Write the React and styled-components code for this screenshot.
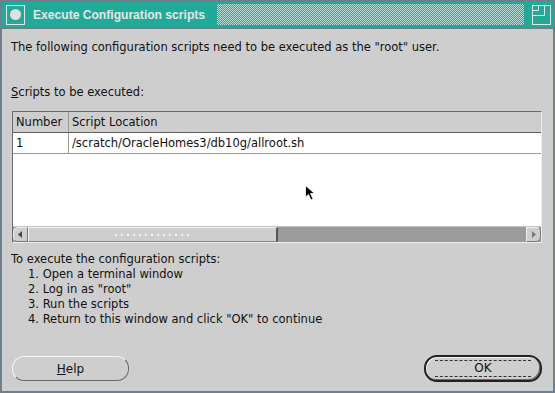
import React from 'react';
import styled, { createGlobalStyle } from 'styled-components';

const Global = createGlobalStyle`
  html, body { margin: 0; padding: 0; background: #6f7f8b; }
  body { font-family: "DejaVu Sans", "Liberation Sans", sans-serif; }
`;

const Frame = styled.div`
  width: 555px;
  height: 393px;
  box-sizing: border-box;
  border: 2px solid #6f7f8b;
  background: #cecece;
  display: flex;
  flex-direction: column;
  position: relative;
  overflow: hidden;
`;

const TitleBar = styled.div`
  height: 25px;
  background: #22aa99;
  display: flex;
  align-items: center;
  padding: 0 2px 0 2px;
  border-bottom: 2px solid #6f7f8b;
`;

const IconBox = styled.div`
  width: 17px;
  height: 18px;
  border: 1px solid #e4e4e4;
  display: flex;
  align-items: center;
  justify-content: center;
  margin-left: 2px;
`;

const Dot = styled.div`
  width: 11px;
  height: 11px;
  border-radius: 50%;
  background: #e0e0e0;
`;

const Title = styled.div`
  color: #e6e6e6;
  font-family: "Liberation Sans", "DejaVu Sans", sans-serif;
  font-weight: bold;
  font-size: 12.1px;
  margin-left: 8px;
  white-space: nowrap;
`;

const Checker = styled.div`
  flex: 1;
  height: 21px;
  margin-left: 12px;
  margin-right: 8px;
  background-color: #22aa99;
  background-image:
    linear-gradient(45deg, #d8e8e4 25%, transparent 25%, transparent 75%, #d8e8e4 75%),
    linear-gradient(45deg, #d8e8e4 25%, transparent 25%, transparent 75%, #d8e8e4 75%);
  background-size: 2px 2px;
  background-position: 0 0, 1px 1px;
  opacity: 0.85;
`;

const MaxBox = styled.svg`
  width: 19px;
  height: 20px;
  flex: none;
`;

const Body = styled.div`
  flex: 1;
  padding: 0 11px 0 9px;
  display: flex;
  flex-direction: column;
  font-size: 11.5px;
  color: #111;
`;

const Line = styled.div`
  height: 15px;
  line-height: 15px;
  white-space: nowrap;
  margin-top: ${p => p.$mt || 0}px;
  padding-left: ${p => p.$indent || 0}px;
`;

const Table = styled.div`
  margin-top: 11px;
  margin-left: 1px;
  height: 130px;
  border: 1px solid #6a6a6a;
  border-right-color: #eeeeee;
  border-bottom-color: #eeeeee;
  display: flex;
  flex-direction: column;
  background: #ffffff;
`;

const Row = styled.div`
  display: flex;
  height: ${p => p.$h}px;
  line-height: ${p => p.$h}px;
  background: ${p => (p.$head ? '#cecece' : '#ffffff')};
  border-bottom: 1px solid ${p => (p.$head ? '#5e5e5e' : '#9a9a9a')};
`;

const Cell = styled.div`
  width: ${p => (p.$w ? p.$w + 'px' : 'auto')};
  flex: ${p => (p.$w ? 'none' : '1')};
  padding-left: 3px;
  border-right: ${p => (p.$w ? '1px solid #9a9a9a' : 'none')};
  white-space: nowrap;
`;

const Empty = styled.div`
  flex: 1;
`;

const ScrollBar = styled.div`
  height: 15px;
  display: flex;
  background: #9c9a9c;
  border-top: 1px solid #c4c4c4;
`;

const Arrow = styled.div`
  width: 13px;
  background: #cecece;
  border: 1px solid #f0f0f0;
  border-right-color: #777;
  border-bottom-color: #777;
  border-radius: ${p => (p.$left ? '5px 0 0 5px' : '0 5px 5px 0')};
  display: flex;
  align-items: center;
  justify-content: center;
`;

const Thumb = styled.div`
  width: 247px;
  background: #cecece;
  border-top: 1px solid #f4f4f4;
  border-left: 1px solid #f4f4f4;
  border-right: 2px solid #555;
  border-bottom: 1px solid #888;
  display: flex;
  align-items: center;
  justify-content: center;
`;

const Grip = styled.div`
  width: 80px;
  height: 4px;
  background-image: radial-gradient(circle, #f6f6f6 0.7px, transparent 0.8px);
  background-size: 6px 4px;
`;

const Track = styled.div`
  flex: 1;
`;

const Buttons = styled.div`
  margin-top: auto;
  margin-bottom: 9px;
  display: flex;
  justify-content: space-between;
  align-items: center;
  padding-left: 1px;
`;

const Button = styled.div`
  width: 117px;
  height: 25px;
  box-sizing: border-box;
  border-radius: 12px;
  border: 1px solid #6a6a6a;
  border-top-color: #f4f4f4;
  border-left-color: #f4f4f4;
  display: flex;
  align-items: center;
  justify-content: center;
  font-size: 12px;
  color: #111;
  ${p =>
    p.$default &&
    `
    width: 118px;
    height: 27px;
    border: 2px solid #222;
    border-radius: 13px;
    box-shadow: inset 1px 1px 0 #f4f4f4, inset -1px -1px 0 #6a6a6a;
  `}
`;

const Focus = styled.div`
  width: 96px;
  height: 15px;
  border-top: 1px dashed #333;
  border-bottom: 1px dashed #333;
  text-align: center;
  line-height: 15px;
`;

const Cursor = styled.svg`
  position: absolute;
  left: 303px;
  top: 183px;
  width: 11px;
  height: 17px;
`;

export default function App() {
  return (
    <>
      <Global />
      <Frame>
        <TitleBar>
          <IconBox>
            <Dot />
          </IconBox>
          <Title>Execute Configuration scripts</Title>
          <Checker />
          <MaxBox viewBox="0 0 19 20">
            <rect x="0.5" y="0.5" width="18" height="19" fill="none" stroke="#e4e4e4" />
            <polyline points="0.5,10.5 12.5,10.5 12.5,0.5" fill="none" stroke="#e4e4e4" />
            <polyline points="0.5,5.5 6.5,5.5 6.5,0.5" fill="none" stroke="#e4e4e4" />
          </MaxBox>
        </TitleBar>
        <Body>
          <Line $mt={11}>The following configuration scripts need to be executed as the "root" user.</Line>
          <Line $mt={30}>
            <u>S</u>cripts to be executed:
          </Line>
          <Table>
            <Row $head $h={20}>
              <Cell $w={52}>Number</Cell>
              <Cell>Script Location</Cell>
            </Row>
            <Row $h={20}>
              <Cell $w={52}>1</Cell>
              <Cell>/scratch/OracleHomes3/db10g/allroot.sh</Cell>
            </Row>
            <Empty />
            <ScrollBar>
              <Arrow $left>
                <svg width="5" height="7" viewBox="0 0 5 7">
                  <polygon points="4,0 4,7 0,3.5" fill="#444" />
                </svg>
              </Arrow>
              <Thumb>
                <Grip />
              </Thumb>
              <Track />
              <Arrow>
                <svg width="5" height="7" viewBox="0 0 5 7">
                  <polygon points="1,0 1,7 5,3.5" fill="#777" />
                </svg>
              </Arrow>
            </ScrollBar>
          </Table>
          <Line $mt={9}>To execute the configuration scripts:</Line>
          <Line $indent={17}>1. Open a terminal window</Line>
          <Line $indent={17}>2. Log in as "root"</Line>
          <Line $indent={17}>3. Run the scripts</Line>
          <Line $indent={17}>4. Return to this window and click "OK" to continue</Line>
          <Buttons>
            <Button>
              <span>
                <u>H</u>elp
              </span>
            </Button>
            <Button $default>
              <Focus>OK</Focus>
            </Button>
          </Buttons>
        </Body>
        <Cursor viewBox="0 0 11 17">
          <polygon points="0.5,0.5 0.5,12 3.5,9.5 6,15 8,14 5.5,8.5 9.5,8.5" fill="#000" stroke="#fff" strokeWidth="0.8" />
        </Cursor>
      </Frame>
    </>
  );
}
